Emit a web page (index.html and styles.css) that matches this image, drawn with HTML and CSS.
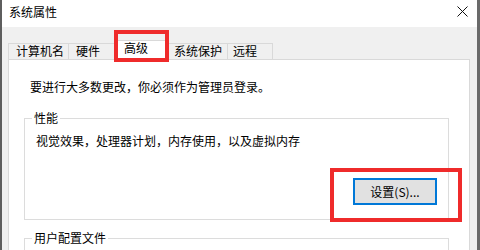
FILE: index.html
```html
<!DOCTYPE html>
<html lang="zh-CN">
<head>
<meta charset="utf-8">
<link rel="stylesheet" href="styles.css">
</head>
<body>
<div class="window">
  <div class="titlebar">
    <span class="title">系统属性</span>
    <span class="close"><svg width="11" height="11" viewBox="0 0 11 11"><path d="M0.5 0.5 L10.5 10.5 M10.5 0.5 L0.5 10.5" stroke="#111" stroke-width="1" fill="none"/></svg></span>
  </div>
  <div class="body">
    <div class="tabs">
      <div class="tab w1">计算机名</div>
      <div class="tab w2">硬件</div>
      <div class="tab sel">高级<span class="mark tabmark"></span></div>
      <div class="tab w4">系统保护</div>
      <div class="tab w5">远程</div>
    </div>
    <div class="panel">
      <p class="note">要进行大多数更改，你必须作为管理员登录。</p>
      <section class="group perf">
        <span class="legend">性能</span>
        <p class="desc">视觉效果，处理器计划，内存使用，以及虚拟内存</p>
        <div class="actions">
          <div class="hl"><button class="btn">设置(S)...</button><span class="mark btnmark"></span></div>
        </div>
      </section>
      <section class="group profile">
        <span class="legend">用户配置文件</span>
      </section>
    </div>
  </div>
</div>
</body>
</html>
```
FILE: styles.css
```css
* { box-sizing: border-box; }
html, body { margin: 0; padding: 0; }
body {
  width: 480px;
  height: 250px;
  overflow: hidden;
  background: #ffffff;
  font-family: "Noto Sans CJK SC", "Noto Sans", sans-serif;
  font-size: 12px;
  color: #000;
}
.window {
  width: 480px;
  height: 250px;
  display: flex;
  flex-direction: column;
  border-left: 2px solid #5e5e5e;
  border-right: 3px solid #6a6a6a;
}
.titlebar {
  height: 27px;
  flex: none;
  background: #ffffff;
  display: flex;
  align-items: flex-start;
  padding-left: 7px;
}
.title {
  line-height: 16px;
  margin-top: 4px;
}
.close {
  margin-left: auto;
  margin-right: 9px;
  margin-top: 6px;
  width: 11px;
  height: 11px;
  display: flex;
}
.body {
  flex: 1;
  background: #f0f0f0;
  padding: 13px 7px 0 6px;
  display: flex;
  flex-direction: column;
  overflow: hidden;
}
.tabs {
  display: flex;
  align-items: flex-end;
  height: 19px;
  position: relative;
  z-index: 2;
}
.tab {
  height: 16px;
  line-height: 13px;
  border: 1px solid #d9d9d9;
  border-bottom: none;
  border-right: none;
  background: #f0f0f0;
  padding-left: 7px;
  white-space: nowrap;
}
.w1 { width: 60px; }
.w2 { width: 48px; }
.w4 { width: 61px; border-left: none; padding-left: 8px; }
.w5 { width: 46px; border-right: 1px solid #d9d9d9; padding-left: 5px; }
.tab.sel {
  position: relative;
  width: 50px;
  height: 20px;
  margin-bottom: -1px;
  background: #ffffff;
  border-right: 1px solid #d9d9d9;
  padding-left: 7px;
  line-height: 14px;
}
.mark {
  position: absolute;
  border: 4px solid #ef2b2b;
  pointer-events: none;
}
.tabmark {
  left: -3px;
  right: -4px;
  top: -11px;
  bottom: -2px;
}
.panel {
  flex: 1;
  background: #ffffff;
  border: 1px solid #d9d9d9;
  border-bottom: none;
  padding: 0 20px 0 15px;
  position: relative;
  z-index: 1;
}
.note {
  margin: 19px 0 0 6px;
  line-height: 16px;
}
.group {
  position: relative;
  margin: 23px 0 0 0;
  border: 1px solid #dcdcdc;
  padding: 14px 11px 14px 11px;
}
.legend {
  position: absolute;
  top: -9px;
  left: 7px;
  padding: 0 2px;
  background: #ffffff;
  line-height: 16px;
}
.desc {
  margin: 0;
  line-height: 16px;
}
.actions {
  display: flex;
  justify-content: flex-end;
  margin-top: 29px;
}
.hl {
  position: relative;
  display: flex;
}
.btn {
  width: 84px;
  height: 27px;
  background: #e1e1e1;
  border: 2px solid #0078d7;
  font-family: "Noto Sans CJK SC", "Noto Sans", sans-serif;
  font-size: 12px;
  color: #000;
  padding: 0;
  line-height: 16px;
}
.btnmark {
  left: -23px;
  right: -25px;
  top: -10px;
  bottom: -17px;
}
.group.profile {
  margin-top: 18px;
  height: 40px;
  padding: 0;
}
```
